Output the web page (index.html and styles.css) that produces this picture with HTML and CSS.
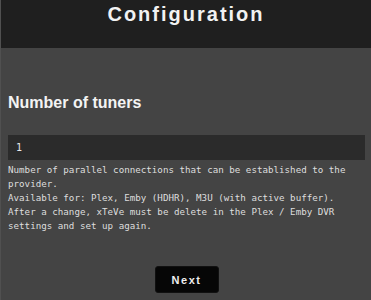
FILE: index.html
```html
<!DOCTYPE html>
<html lang="en">
<head>
    <meta charset="UTF-8">
    <title>xTeVe Configuration</title>
    <link rel="stylesheet" href="styles.css">
</head>
<body>
    <div class="wizard">
        <header class="header">
            <h1>Configuration</h1>
        </header>

        <div class="content">
            <h2 class="setting-title">Number of tuners</h2>
            <input type="text" class="setting-input" value="1">
            <p class="setting-desc">Number of parallel connections that can be established to the provider.<br>Available for: Plex, Emby (HDHR), M3U (with active buffer).<br>After a change, xTeVe must be delete in the Plex / Emby DVR settings and set up again.</p>

            <div class="actions">
                <button class="next-btn">Next</button>
            </div>
        </div>
    </div>
</body>
</html>
```

FILE: styles.css
```css
* {
    box-sizing: border-box;
    margin: 0;
    padding: 0;
}

body {
    font-family: "Liberation Sans", Arial, sans-serif;
    background: #444444;
    color: #ffffff;
    height: 300px;
    overflow: hidden;
}

.wizard {
    border-left: 1px solid #505050;
    min-height: 300px;
}

.header {
    background: #1f1f1f;
    height: 48px;
    text-align: center;
    padding-top: 3px;
}

.header h1 {
    font-size: 20px;
    font-weight: bold;
    letter-spacing: 2px;
    color: #f2f2f2;
}

.content {
    padding: 46px 6px 0 7px;
}

.setting-title {
    font-size: 16px;
    font-weight: bold;
    color: #f4f4f4;
    margin-bottom: 23px;
}

.setting-input {
    display: block;
    width: 100%;
    height: 25px;
    background: #2b2b2b;
    border: none;
    color: #e8e8e8;
    font-family: "DejaVu Sans Mono", monospace;
    font-size: 10px;
    padding: 0 8px;
    outline: none;
}

.setting-desc {
    font-family: "DejaVu Sans Mono", monospace;
    font-size: 9.2px;
    line-height: 14px;
    color: #dedede;
    margin-top: 3px;
}

.actions {
    display: flex;
    justify-content: center;
    margin-top: 33px;
}

.next-btn {
    background: #060606;
    color: #eeeeee;
    border: 1px solid #111111;
    border-radius: 3px;
    width: 64px;
    height: 27px;
    font-family: "Liberation Sans", Arial, sans-serif;
    font-weight: bold;
    font-size: 11px;
    letter-spacing: 1.6px;
    cursor: pointer;
}
```
